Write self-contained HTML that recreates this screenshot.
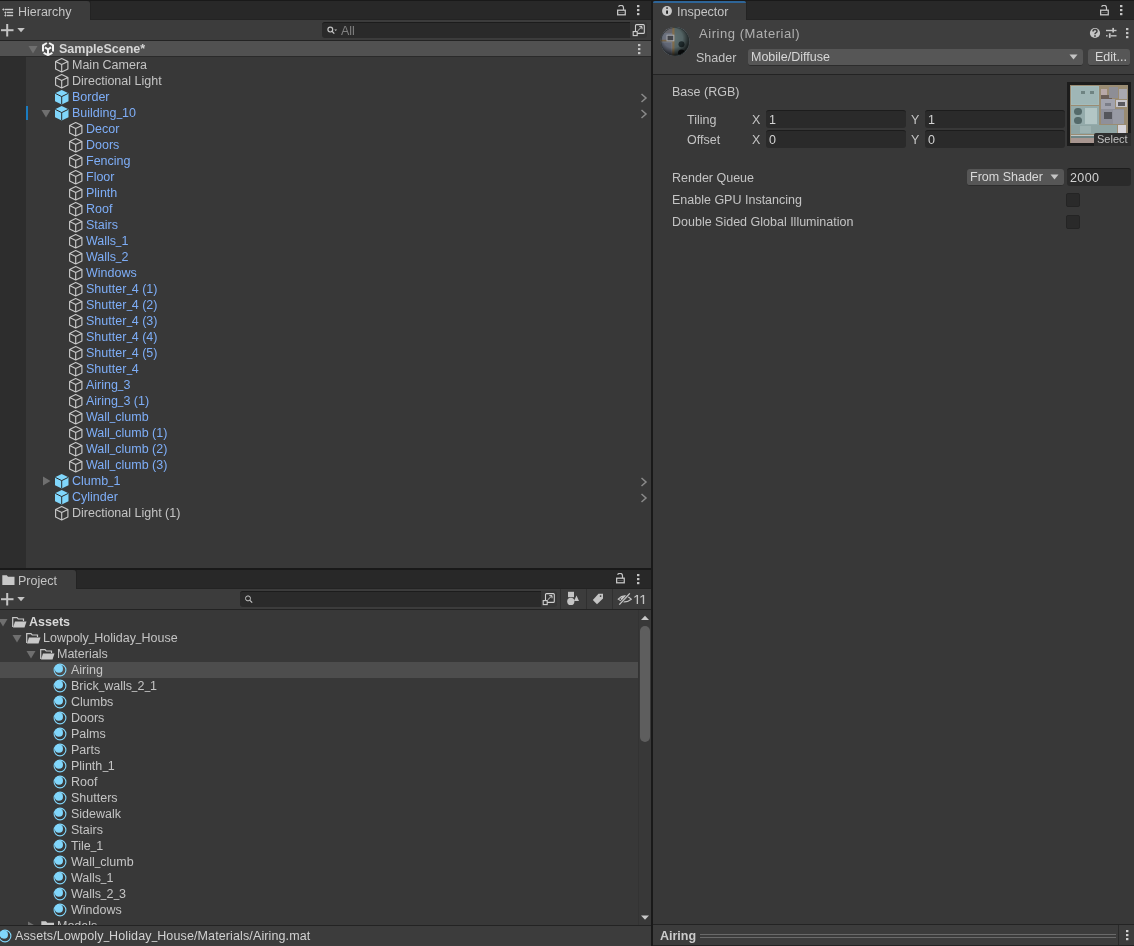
<!DOCTYPE html><html><head><meta charset="utf-8"><style>
html,body{margin:0;padding:0;width:1134px;height:946px;overflow:hidden;background:#191919;}
body{position:relative;font-family:"Liberation Sans", sans-serif;-webkit-font-smoothing:antialiased;}
div{position:absolute;box-sizing:border-box;}
.t{white-space:nowrap;will-change:transform;}
.u{display:inline-block;transform:scaleX(0.8);margin:0 -0.75px;position:relative;top:-1.5px;}
svg{position:absolute;}
</style></head><body>
<div style="left:0px;top:1px;width:651px;height:19px;background:#282828;border-bottom:1px solid #232323"></div>
<div style="left:89px;top:1px;width:2px;height:19px;background:#232323;"></div>
<div style="left:0px;top:1px;width:90px;height:20px;background:#3c3c3c;border-radius:0 3px 0 0"></div>
<svg style="position:absolute;left:0px;top:2px" width="16" height="16" viewBox="0 0 16 16"><g fill="#c8c8c8"><rect x="4.8" y="6.8" width="8.3" height="1.4"/><path d="M2.1 7.5 L3.4 6.2 L4.7 7.5 L3.4 8.8 Z"/><rect x="6.9" y="9.8" width="6.2" height="1.4"/><path d="M4.2 10.5 L5.4 9.3 L6.6 10.5 L5.4 11.7 Z"/><rect x="6.9" y="12.8" width="6.2" height="1.4"/><path d="M4.2 13.5 L5.4 12.3 L6.6 13.5 L5.4 14.7 Z"/><rect x="5.1" y="10.5" width="0.6" height="3"/></g></svg>
<div class="t" style="left:18px;top:4px;color:#c4c4c4;font-size:12.5px;font-weight:normal;line-height:16px;">Hierarchy</div>
<svg style="position:absolute;left:617px;top:4.6px" width="10" height="11" viewBox="0 0 10 11"><path d="M1.5 1.6 Q2.7 0.1 4.3 0.3 Q6.5 0.5 6.5 2.8 L6.5 4.9" fill="none" stroke="#c4c4c4" stroke-width="1.2"/><rect x="0.65" y="5.2" width="7.6" height="4.6" fill="none" stroke="#c4c4c4" stroke-width="1.3"/><rect x="1.3" y="7.1" width="6.3" height="0.9" fill="#555555"/></svg>
<svg style="position:absolute;left:637px;top:5px" width="3" height="11" viewBox="0 0 3 11"><rect x="0" y="0" width="2.4" height="2.2" fill="#c4c4c4"/><rect x="0" y="4" width="2.4" height="2.2" fill="#c4c4c4"/><rect x="0" y="8" width="2.4" height="2.2" fill="#c4c4c4"/></svg>
<div style="left:0px;top:20px;width:651px;height:20px;background:#3c3c3c;"></div>
<svg style="position:absolute;left:1px;top:24px" width="26" height="13" viewBox="0 0 26 13"><rect x="0" y="5.2" width="12.5" height="2" fill="#c4c4c4"/><rect x="5.2" y="0" width="2" height="12.5" fill="#c4c4c4"/><path d="M16.3 4 L23.8 4 L20 8.3 Z" fill="#c4c4c4"/></svg>
<div style="left:322px;top:22px;width:308px;height:16px;background:#2a2a2a;border-radius:3px 0 0 3px;border-top:1px solid #1c1c1c"></div>
<svg style="position:absolute;left:327px;top:25.5px" width="14" height="10" viewBox="0 0 14 10"><circle cx="3.3" cy="3.6" r="2.4" fill="none" stroke="#c4c4c4" stroke-width="1.2"/><path d="M5 5.3 L7.3 7.6" stroke="#c4c4c4" stroke-width="1.3"/><path d="M7.3 3.4 L10.1 3.4 L8.7 5 Z" fill="#c4c4c4"/></svg>
<div class="t" style="left:341px;top:22.5px;color:#808080;font-size:12.5px;font-weight:normal;line-height:16px;">All</div>
<div style="left:630px;top:22px;width:17px;height:16px;background:#363636;border-radius:0 3px 3px 0"></div>
<svg style="position:absolute;left:632px;top:24px" width="13" height="13" viewBox="0 0 13 13"><rect x="3.5" y="0.6" width="8.8" height="8.8" rx="1" fill="none" stroke="#d0d0d0" stroke-width="1.1"/><path d="M5.5 7 L10 2.6 M7.3 2.6 L10 2.6 L10 5.3" fill="none" stroke="#d0d0d0" stroke-width="1"/><rect x="1.2" y="7.6" width="4" height="4" fill="#363636" stroke="#d0d0d0" stroke-width="1.1"/></svg>
<div style="left:0px;top:40px;width:651px;height:1px;background:#232323;"></div>
<div style="left:0px;top:41px;width:651px;height:15px;background:#515151;"></div>
<div style="left:0px;top:56px;width:651px;height:1px;background:#2a2a2a;"></div>
<svg style="position:absolute;left:28px;top:45px" width="10" height="9" viewBox="0 0 10 9"><path d="M0.5 1 L9.5 1 L5 8.5 Z" fill="#6f6f6f"/></svg>
<svg style="position:absolute;left:42px;top:41.7px" width="12" height="14" viewBox="0 0 12 14"><g fill="none" stroke="#f2f2f2" stroke-width="2" stroke-linejoin="miter" stroke-miterlimit="3"><path d="M1 9.6 L1 3.3 L4.9 1"/><path d="M11 9.6 L11 3.3 L7.1 1"/><path d="M2.9 5.4 L6 7.4 L9.1 5.4"/><path d="M6 7.4 L6 12.2"/><path d="M1.6 10.8 L6 13.1 L10.4 10.8"/></g></svg>
<div class="t" style="left:59px;top:41px;color:#d6d6d6;font-size:12.5px;font-weight:bold;line-height:16px;">SampleScene*</div>
<svg style="position:absolute;left:638px;top:44px" width="3" height="11" viewBox="0 0 3 11"><rect x="0" y="0" width="2.4" height="2.2" fill="#c4c4c4"/><rect x="0" y="4" width="2.4" height="2.2" fill="#c4c4c4"/><rect x="0" y="8" width="2.4" height="2.2" fill="#c4c4c4"/></svg>
<div style="left:0px;top:57px;width:651px;height:511px;background:#383838;"></div>
<div style="left:0px;top:57px;width:26px;height:511px;background:#2d2d2d;"></div>
<div style="left:26px;top:106px;width:2px;height:14px;background:#1a7bc0;"></div>
<svg style="position:absolute;left:55px;top:58px" width="14" height="15" viewBox="0 0 14 15"><path d="M6.7 0.6 L12.9 3.5 L12.9 10.9 L6.7 13.9 L0.6 10.9 L0.6 3.5 Z M0.6 3.5 L6.7 6.5 L12.9 3.5 M6.7 6.5 L6.7 13.9" fill="none" stroke="#c8c8c8" stroke-width="1.15" stroke-linejoin="round"/></svg>
<div class="t" style="left:72px;top:57px;color:#c4c4c4;font-size:12.5px;font-weight:normal;line-height:16px;">Main Camera</div>
<svg style="position:absolute;left:55px;top:74px" width="14" height="15" viewBox="0 0 14 15"><path d="M6.7 0.6 L12.9 3.5 L12.9 10.9 L6.7 13.9 L0.6 10.9 L0.6 3.5 Z M0.6 3.5 L6.7 6.5 L12.9 3.5 M6.7 6.5 L6.7 13.9" fill="none" stroke="#c8c8c8" stroke-width="1.15" stroke-linejoin="round"/></svg>
<div class="t" style="left:72px;top:73px;color:#c4c4c4;font-size:12.5px;font-weight:normal;line-height:16px;">Directional Light</div>
<svg style="position:absolute;left:55px;top:90px" width="14" height="15" viewBox="0 0 14 15"><path d="M6.7 0 L13.5 3.2 L13.5 11.2 L6.7 14.5 L0 11.2 L0 3.2 Z" fill="#80d6fb"/><path d="M0.3 3.4 L6.7 6.6 L13.2 3.4 M6.7 6.6 L6.7 14.2" fill="none" stroke="#2b2b2b" stroke-width="1"/></svg>
<div class="t" style="left:72px;top:89px;color:#7eaef8;font-size:12.5px;font-weight:normal;line-height:16px;">Border</div>
<svg style="position:absolute;left:640px;top:92.5px" width="8" height="10" viewBox="0 0 8 10"><path d="M1.5 1 L6 5 L1.5 9" fill="none" stroke="#8a8a8a" stroke-width="1.5"/></svg>
<svg style="position:absolute;left:55px;top:106px" width="14" height="15" viewBox="0 0 14 15"><path d="M6.7 0 L13.5 3.2 L13.5 11.2 L6.7 14.5 L0 11.2 L0 3.2 Z" fill="#80d6fb"/><path d="M0.3 3.4 L6.7 6.6 L13.2 3.4 M6.7 6.6 L6.7 14.2" fill="none" stroke="#2b2b2b" stroke-width="1"/></svg>
<svg style="position:absolute;left:41px;top:109px" width="10" height="9" viewBox="0 0 10 9"><path d="M0.5 1 L9.5 1 L5 8.5 Z" fill="#6f6f6f"/></svg>
<div class="t" style="left:72px;top:105px;color:#7eaef8;font-size:12.5px;font-weight:normal;line-height:16px;">Building<span class="u">_</span>10</div>
<svg style="position:absolute;left:640px;top:108.5px" width="8" height="10" viewBox="0 0 8 10"><path d="M1.5 1 L6 5 L1.5 9" fill="none" stroke="#8a8a8a" stroke-width="1.5"/></svg>
<svg style="position:absolute;left:69px;top:122px" width="14" height="15" viewBox="0 0 14 15"><path d="M6.7 0.6 L12.9 3.5 L12.9 10.9 L6.7 13.9 L0.6 10.9 L0.6 3.5 Z M0.6 3.5 L6.7 6.5 L12.9 3.5 M6.7 6.5 L6.7 13.9" fill="none" stroke="#c8c8c8" stroke-width="1.15" stroke-linejoin="round"/></svg>
<div class="t" style="left:86px;top:121px;color:#7eaef8;font-size:12.5px;font-weight:normal;line-height:16px;">Decor</div>
<svg style="position:absolute;left:69px;top:138px" width="14" height="15" viewBox="0 0 14 15"><path d="M6.7 0.6 L12.9 3.5 L12.9 10.9 L6.7 13.9 L0.6 10.9 L0.6 3.5 Z M0.6 3.5 L6.7 6.5 L12.9 3.5 M6.7 6.5 L6.7 13.9" fill="none" stroke="#c8c8c8" stroke-width="1.15" stroke-linejoin="round"/></svg>
<div class="t" style="left:86px;top:137px;color:#7eaef8;font-size:12.5px;font-weight:normal;line-height:16px;">Doors</div>
<svg style="position:absolute;left:69px;top:154px" width="14" height="15" viewBox="0 0 14 15"><path d="M6.7 0.6 L12.9 3.5 L12.9 10.9 L6.7 13.9 L0.6 10.9 L0.6 3.5 Z M0.6 3.5 L6.7 6.5 L12.9 3.5 M6.7 6.5 L6.7 13.9" fill="none" stroke="#c8c8c8" stroke-width="1.15" stroke-linejoin="round"/></svg>
<div class="t" style="left:86px;top:153px;color:#7eaef8;font-size:12.5px;font-weight:normal;line-height:16px;">Fencing</div>
<svg style="position:absolute;left:69px;top:170px" width="14" height="15" viewBox="0 0 14 15"><path d="M6.7 0.6 L12.9 3.5 L12.9 10.9 L6.7 13.9 L0.6 10.9 L0.6 3.5 Z M0.6 3.5 L6.7 6.5 L12.9 3.5 M6.7 6.5 L6.7 13.9" fill="none" stroke="#c8c8c8" stroke-width="1.15" stroke-linejoin="round"/></svg>
<div class="t" style="left:86px;top:169px;color:#7eaef8;font-size:12.5px;font-weight:normal;line-height:16px;">Floor</div>
<svg style="position:absolute;left:69px;top:186px" width="14" height="15" viewBox="0 0 14 15"><path d="M6.7 0.6 L12.9 3.5 L12.9 10.9 L6.7 13.9 L0.6 10.9 L0.6 3.5 Z M0.6 3.5 L6.7 6.5 L12.9 3.5 M6.7 6.5 L6.7 13.9" fill="none" stroke="#c8c8c8" stroke-width="1.15" stroke-linejoin="round"/></svg>
<div class="t" style="left:86px;top:185px;color:#7eaef8;font-size:12.5px;font-weight:normal;line-height:16px;">Plinth</div>
<svg style="position:absolute;left:69px;top:202px" width="14" height="15" viewBox="0 0 14 15"><path d="M6.7 0.6 L12.9 3.5 L12.9 10.9 L6.7 13.9 L0.6 10.9 L0.6 3.5 Z M0.6 3.5 L6.7 6.5 L12.9 3.5 M6.7 6.5 L6.7 13.9" fill="none" stroke="#c8c8c8" stroke-width="1.15" stroke-linejoin="round"/></svg>
<div class="t" style="left:86px;top:201px;color:#7eaef8;font-size:12.5px;font-weight:normal;line-height:16px;">Roof</div>
<svg style="position:absolute;left:69px;top:218px" width="14" height="15" viewBox="0 0 14 15"><path d="M6.7 0.6 L12.9 3.5 L12.9 10.9 L6.7 13.9 L0.6 10.9 L0.6 3.5 Z M0.6 3.5 L6.7 6.5 L12.9 3.5 M6.7 6.5 L6.7 13.9" fill="none" stroke="#c8c8c8" stroke-width="1.15" stroke-linejoin="round"/></svg>
<div class="t" style="left:86px;top:217px;color:#7eaef8;font-size:12.5px;font-weight:normal;line-height:16px;">Stairs</div>
<svg style="position:absolute;left:69px;top:234px" width="14" height="15" viewBox="0 0 14 15"><path d="M6.7 0.6 L12.9 3.5 L12.9 10.9 L6.7 13.9 L0.6 10.9 L0.6 3.5 Z M0.6 3.5 L6.7 6.5 L12.9 3.5 M6.7 6.5 L6.7 13.9" fill="none" stroke="#c8c8c8" stroke-width="1.15" stroke-linejoin="round"/></svg>
<div class="t" style="left:86px;top:233px;color:#7eaef8;font-size:12.5px;font-weight:normal;line-height:16px;">Walls<span class="u">_</span>1</div>
<svg style="position:absolute;left:69px;top:250px" width="14" height="15" viewBox="0 0 14 15"><path d="M6.7 0.6 L12.9 3.5 L12.9 10.9 L6.7 13.9 L0.6 10.9 L0.6 3.5 Z M0.6 3.5 L6.7 6.5 L12.9 3.5 M6.7 6.5 L6.7 13.9" fill="none" stroke="#c8c8c8" stroke-width="1.15" stroke-linejoin="round"/></svg>
<div class="t" style="left:86px;top:249px;color:#7eaef8;font-size:12.5px;font-weight:normal;line-height:16px;">Walls<span class="u">_</span>2</div>
<svg style="position:absolute;left:69px;top:266px" width="14" height="15" viewBox="0 0 14 15"><path d="M6.7 0.6 L12.9 3.5 L12.9 10.9 L6.7 13.9 L0.6 10.9 L0.6 3.5 Z M0.6 3.5 L6.7 6.5 L12.9 3.5 M6.7 6.5 L6.7 13.9" fill="none" stroke="#c8c8c8" stroke-width="1.15" stroke-linejoin="round"/></svg>
<div class="t" style="left:86px;top:265px;color:#7eaef8;font-size:12.5px;font-weight:normal;line-height:16px;">Windows</div>
<svg style="position:absolute;left:69px;top:282px" width="14" height="15" viewBox="0 0 14 15"><path d="M6.7 0.6 L12.9 3.5 L12.9 10.9 L6.7 13.9 L0.6 10.9 L0.6 3.5 Z M0.6 3.5 L6.7 6.5 L12.9 3.5 M6.7 6.5 L6.7 13.9" fill="none" stroke="#c8c8c8" stroke-width="1.15" stroke-linejoin="round"/></svg>
<div class="t" style="left:86px;top:281px;color:#7eaef8;font-size:12.5px;font-weight:normal;line-height:16px;">Shutter<span class="u">_</span>4 (1)</div>
<svg style="position:absolute;left:69px;top:298px" width="14" height="15" viewBox="0 0 14 15"><path d="M6.7 0.6 L12.9 3.5 L12.9 10.9 L6.7 13.9 L0.6 10.9 L0.6 3.5 Z M0.6 3.5 L6.7 6.5 L12.9 3.5 M6.7 6.5 L6.7 13.9" fill="none" stroke="#c8c8c8" stroke-width="1.15" stroke-linejoin="round"/></svg>
<div class="t" style="left:86px;top:297px;color:#7eaef8;font-size:12.5px;font-weight:normal;line-height:16px;">Shutter<span class="u">_</span>4 (2)</div>
<svg style="position:absolute;left:69px;top:314px" width="14" height="15" viewBox="0 0 14 15"><path d="M6.7 0.6 L12.9 3.5 L12.9 10.9 L6.7 13.9 L0.6 10.9 L0.6 3.5 Z M0.6 3.5 L6.7 6.5 L12.9 3.5 M6.7 6.5 L6.7 13.9" fill="none" stroke="#c8c8c8" stroke-width="1.15" stroke-linejoin="round"/></svg>
<div class="t" style="left:86px;top:313px;color:#7eaef8;font-size:12.5px;font-weight:normal;line-height:16px;">Shutter<span class="u">_</span>4 (3)</div>
<svg style="position:absolute;left:69px;top:330px" width="14" height="15" viewBox="0 0 14 15"><path d="M6.7 0.6 L12.9 3.5 L12.9 10.9 L6.7 13.9 L0.6 10.9 L0.6 3.5 Z M0.6 3.5 L6.7 6.5 L12.9 3.5 M6.7 6.5 L6.7 13.9" fill="none" stroke="#c8c8c8" stroke-width="1.15" stroke-linejoin="round"/></svg>
<div class="t" style="left:86px;top:329px;color:#7eaef8;font-size:12.5px;font-weight:normal;line-height:16px;">Shutter<span class="u">_</span>4 (4)</div>
<svg style="position:absolute;left:69px;top:346px" width="14" height="15" viewBox="0 0 14 15"><path d="M6.7 0.6 L12.9 3.5 L12.9 10.9 L6.7 13.9 L0.6 10.9 L0.6 3.5 Z M0.6 3.5 L6.7 6.5 L12.9 3.5 M6.7 6.5 L6.7 13.9" fill="none" stroke="#c8c8c8" stroke-width="1.15" stroke-linejoin="round"/></svg>
<div class="t" style="left:86px;top:345px;color:#7eaef8;font-size:12.5px;font-weight:normal;line-height:16px;">Shutter<span class="u">_</span>4 (5)</div>
<svg style="position:absolute;left:69px;top:362px" width="14" height="15" viewBox="0 0 14 15"><path d="M6.7 0.6 L12.9 3.5 L12.9 10.9 L6.7 13.9 L0.6 10.9 L0.6 3.5 Z M0.6 3.5 L6.7 6.5 L12.9 3.5 M6.7 6.5 L6.7 13.9" fill="none" stroke="#c8c8c8" stroke-width="1.15" stroke-linejoin="round"/></svg>
<div class="t" style="left:86px;top:361px;color:#7eaef8;font-size:12.5px;font-weight:normal;line-height:16px;">Shutter<span class="u">_</span>4</div>
<svg style="position:absolute;left:69px;top:378px" width="14" height="15" viewBox="0 0 14 15"><path d="M6.7 0.6 L12.9 3.5 L12.9 10.9 L6.7 13.9 L0.6 10.9 L0.6 3.5 Z M0.6 3.5 L6.7 6.5 L12.9 3.5 M6.7 6.5 L6.7 13.9" fill="none" stroke="#c8c8c8" stroke-width="1.15" stroke-linejoin="round"/></svg>
<div class="t" style="left:86px;top:377px;color:#7eaef8;font-size:12.5px;font-weight:normal;line-height:16px;">Airing<span class="u">_</span>3</div>
<svg style="position:absolute;left:69px;top:394px" width="14" height="15" viewBox="0 0 14 15"><path d="M6.7 0.6 L12.9 3.5 L12.9 10.9 L6.7 13.9 L0.6 10.9 L0.6 3.5 Z M0.6 3.5 L6.7 6.5 L12.9 3.5 M6.7 6.5 L6.7 13.9" fill="none" stroke="#c8c8c8" stroke-width="1.15" stroke-linejoin="round"/></svg>
<div class="t" style="left:86px;top:393px;color:#7eaef8;font-size:12.5px;font-weight:normal;line-height:16px;">Airing<span class="u">_</span>3 (1)</div>
<svg style="position:absolute;left:69px;top:410px" width="14" height="15" viewBox="0 0 14 15"><path d="M6.7 0.6 L12.9 3.5 L12.9 10.9 L6.7 13.9 L0.6 10.9 L0.6 3.5 Z M0.6 3.5 L6.7 6.5 L12.9 3.5 M6.7 6.5 L6.7 13.9" fill="none" stroke="#c8c8c8" stroke-width="1.15" stroke-linejoin="round"/></svg>
<div class="t" style="left:86px;top:409px;color:#7eaef8;font-size:12.5px;font-weight:normal;line-height:16px;">Wall<span class="u">_</span>clumb</div>
<svg style="position:absolute;left:69px;top:426px" width="14" height="15" viewBox="0 0 14 15"><path d="M6.7 0.6 L12.9 3.5 L12.9 10.9 L6.7 13.9 L0.6 10.9 L0.6 3.5 Z M0.6 3.5 L6.7 6.5 L12.9 3.5 M6.7 6.5 L6.7 13.9" fill="none" stroke="#c8c8c8" stroke-width="1.15" stroke-linejoin="round"/></svg>
<div class="t" style="left:86px;top:425px;color:#7eaef8;font-size:12.5px;font-weight:normal;line-height:16px;">Wall<span class="u">_</span>clumb (1)</div>
<svg style="position:absolute;left:69px;top:442px" width="14" height="15" viewBox="0 0 14 15"><path d="M6.7 0.6 L12.9 3.5 L12.9 10.9 L6.7 13.9 L0.6 10.9 L0.6 3.5 Z M0.6 3.5 L6.7 6.5 L12.9 3.5 M6.7 6.5 L6.7 13.9" fill="none" stroke="#c8c8c8" stroke-width="1.15" stroke-linejoin="round"/></svg>
<div class="t" style="left:86px;top:441px;color:#7eaef8;font-size:12.5px;font-weight:normal;line-height:16px;">Wall<span class="u">_</span>clumb (2)</div>
<svg style="position:absolute;left:69px;top:458px" width="14" height="15" viewBox="0 0 14 15"><path d="M6.7 0.6 L12.9 3.5 L12.9 10.9 L6.7 13.9 L0.6 10.9 L0.6 3.5 Z M0.6 3.5 L6.7 6.5 L12.9 3.5 M6.7 6.5 L6.7 13.9" fill="none" stroke="#c8c8c8" stroke-width="1.15" stroke-linejoin="round"/></svg>
<div class="t" style="left:86px;top:457px;color:#7eaef8;font-size:12.5px;font-weight:normal;line-height:16px;">Wall<span class="u">_</span>clumb (3)</div>
<svg style="position:absolute;left:55px;top:474px" width="14" height="15" viewBox="0 0 14 15"><path d="M6.7 0 L13.5 3.2 L13.5 11.2 L6.7 14.5 L0 11.2 L0 3.2 Z" fill="#80d6fb"/><path d="M0.3 3.4 L6.7 6.6 L13.2 3.4 M6.7 6.6 L6.7 14.2" fill="none" stroke="#2b2b2b" stroke-width="1"/></svg>
<svg style="position:absolute;left:42px;top:476px" width="9" height="10" viewBox="0 0 9 10"><path d="M1 0.5 L8.5 5 L1 9.5 Z" fill="#6f6f6f"/></svg>
<div class="t" style="left:72px;top:473px;color:#7eaef8;font-size:12.5px;font-weight:normal;line-height:16px;">Clumb<span class="u">_</span>1</div>
<svg style="position:absolute;left:640px;top:476.5px" width="8" height="10" viewBox="0 0 8 10"><path d="M1.5 1 L6 5 L1.5 9" fill="none" stroke="#8a8a8a" stroke-width="1.5"/></svg>
<svg style="position:absolute;left:55px;top:490px" width="14" height="15" viewBox="0 0 14 15"><path d="M6.7 0 L13.5 3.2 L13.5 11.2 L6.7 14.5 L0 11.2 L0 3.2 Z" fill="#80d6fb"/><path d="M0.3 3.4 L6.7 6.6 L13.2 3.4 M6.7 6.6 L6.7 14.2" fill="none" stroke="#2b2b2b" stroke-width="1"/></svg>
<div class="t" style="left:72px;top:489px;color:#7eaef8;font-size:12.5px;font-weight:normal;line-height:16px;">Cylinder</div>
<svg style="position:absolute;left:640px;top:492.5px" width="8" height="10" viewBox="0 0 8 10"><path d="M1.5 1 L6 5 L1.5 9" fill="none" stroke="#8a8a8a" stroke-width="1.5"/></svg>
<svg style="position:absolute;left:55px;top:506px" width="14" height="15" viewBox="0 0 14 15"><path d="M6.7 0.6 L12.9 3.5 L12.9 10.9 L6.7 13.9 L0.6 10.9 L0.6 3.5 Z M0.6 3.5 L6.7 6.5 L12.9 3.5 M6.7 6.5 L6.7 13.9" fill="none" stroke="#c8c8c8" stroke-width="1.15" stroke-linejoin="round"/></svg>
<div class="t" style="left:72px;top:505px;color:#c4c4c4;font-size:12.5px;font-weight:normal;line-height:16px;">Directional Light (1)</div>
<div style="left:0px;top:568px;width:651px;height:2px;background:#191919;"></div>
<div style="left:0px;top:570px;width:651px;height:19px;background:#282828;border-bottom:1px solid #232323"></div>
<div style="left:75px;top:570px;width:2px;height:19px;background:#232323;"></div>
<div style="left:0px;top:570px;width:76px;height:20px;background:#3c3c3c;border-radius:0 3px 0 0"></div>
<svg style="position:absolute;left:1.5px;top:575px" width="13" height="11" viewBox="0 0 13 11"><path d="M0.3 0.3 L4.8 0.3 L6 1.8 L12.5 1.8 L12.5 10 L0.3 10 Z" fill="#c8c8c8"/></svg>
<div class="t" style="left:18px;top:573px;color:#c4c4c4;font-size:12.5px;font-weight:normal;line-height:16px;">Project</div>
<svg style="position:absolute;left:616px;top:573px" width="10" height="11" viewBox="0 0 10 11"><path d="M1.5 1.6 Q2.7 0.1 4.3 0.3 Q6.5 0.5 6.5 2.8 L6.5 4.9" fill="none" stroke="#c4c4c4" stroke-width="1.2"/><rect x="0.65" y="5.2" width="7.6" height="4.6" fill="none" stroke="#c4c4c4" stroke-width="1.3"/><rect x="1.3" y="7.1" width="6.3" height="0.9" fill="#555555"/></svg>
<svg style="position:absolute;left:637px;top:574px" width="3" height="11" viewBox="0 0 3 11"><rect x="0" y="0" width="2.4" height="2.2" fill="#c4c4c4"/><rect x="0" y="4" width="2.4" height="2.2" fill="#c4c4c4"/><rect x="0" y="8" width="2.4" height="2.2" fill="#c4c4c4"/></svg>
<div style="left:0px;top:589px;width:651px;height:20px;background:#3c3c3c;"></div>
<svg style="position:absolute;left:1px;top:593px" width="26" height="13" viewBox="0 0 26 13"><rect x="0" y="5.2" width="12.5" height="2" fill="#c4c4c4"/><rect x="5.2" y="0" width="2" height="12.5" fill="#c4c4c4"/><path d="M16.3 4 L23.8 4 L20 8.3 Z" fill="#c4c4c4"/></svg>
<div style="left:240px;top:591px;width:301px;height:16px;background:#2a2a2a;border-radius:3px 0 0 3px;border-top:1px solid #1c1c1c"></div>
<svg style="position:absolute;left:245px;top:595px" width="10" height="10" viewBox="0 0 10 10"><circle cx="3" cy="3.4" r="2.5" fill="none" stroke="#c4c4c4" stroke-width="1"/><path d="M4.9 5.3 L7.2 7.6" stroke="#c4c4c4" stroke-width="1.2"/></svg>
<div style="left:541px;top:591px;width:16px;height:16px;background:#363636;border-radius:0 3px 3px 0"></div>
<svg style="position:absolute;left:542px;top:593px" width="13" height="13" viewBox="0 0 13 13"><rect x="3.5" y="0.6" width="8.8" height="8.8" rx="1" fill="none" stroke="#d0d0d0" stroke-width="1.1"/><path d="M5.5 7 L10 2.6 M7.3 2.6 L10 2.6 L10 5.3" fill="none" stroke="#d0d0d0" stroke-width="1"/><rect x="1.2" y="7.6" width="4" height="4" fill="#363636" stroke="#d0d0d0" stroke-width="1.1"/></svg>
<div style="left:560px;top:589px;width:1px;height:20px;background:#303030;"></div>
<div style="left:586px;top:589px;width:1px;height:20px;background:#303030;"></div>
<div style="left:612px;top:589px;width:1px;height:20px;background:#303030;"></div>
<svg style="position:absolute;left:566px;top:591px" width="14" height="15" viewBox="0 0 14 15"><rect x="2" y="0.8" width="6" height="5.4" fill="#c4c4c4"/><circle cx="4.8" cy="10.4" r="3.6" fill="#c4c4c4"/><path d="M8 9.9 L10.5 4.6 L13 9.9 Z" fill="#c4c4c4"/></svg>
<svg style="position:absolute;left:592px;top:593px" width="13" height="12" viewBox="0 0 13 12"><path d="M6.5 0.8 L11 0.8 L11 5.6 L5 11.3 L0.8 7 Z" fill="#c4c4c4"/><circle cx="8.6" cy="3.1" r="0.9" fill="#3c3c3c"/></svg>
<svg style="position:absolute;left:617px;top:592px" width="16" height="14" viewBox="0 0 16 14"><path d="M1.2 7.2 Q7.5 0.6 14.3 7.2 Q7.5 12.6 1.2 7.2 Z" fill="none" stroke="#c4c4c4" stroke-width="1.1"/><path d="M3.5 6.5 Q6 3.2 9.6 4 L5.5 8.8 Q4 8.2 3.5 6.5 Z" fill="#c4c4c4"/><path d="M7.2 8.6 L9.8 5.6" stroke="#c4c4c4" stroke-width="1"/><path d="M2.3 12.6 L12.8 1.4" stroke="#3c3c3c" stroke-width="2.4"/><path d="M2.3 12.6 L12.8 1.4" stroke="#c8c8c8" stroke-width="1.3"/></svg>
<svg style="position:absolute;left:633px;top:594px" width="13" height="11" viewBox="0 0 13 11"><g fill="#c4c4c4"><rect x="3.7" y="1" width="1.35" height="9"/><rect x="9.8" y="1" width="1.35" height="9"/></g><g stroke="#c4c4c4" stroke-width="1.1"><path d="M1.3 3.4 L4.3 1.3"/><path d="M7.4 3.4 L10.4 1.3"/></g></svg>
<div style="left:0px;top:609px;width:651px;height:1px;background:#232323;"></div>
<div style="left:0px;top:610px;width:651px;height:315px;background:#383838;"></div>
<div style="left:0px;top:662px;width:638px;height:16px;background:#4d4d4d;"></div>
<svg style="position:absolute;left:12px;top:617px" width="15" height="11" viewBox="0 0 15 11"><path d="M0.7 10 L0.7 0.7 L5 0.7 L6.2 2 L11.5 2 L11.5 4" fill="none" stroke="#c8c8c8" stroke-width="1.2"/><path d="M1 10.5 L3 4.5 L14.5 4.5 L12.5 10.5 Z" fill="#c8c8c8"/></svg>
<svg style="position:absolute;left:-2.5px;top:618px" width="10" height="9" viewBox="0 0 10 9"><path d="M0.5 1 L9.5 1 L5 8.5 Z" fill="#6f6f6f"/></svg>
<div class="t" style="left:28.5px;top:614px;color:#d8d8d8;font-size:12.5px;font-weight:bold;line-height:16px;">Assets</div>
<svg style="position:absolute;left:26px;top:633px" width="15" height="11" viewBox="0 0 15 11"><path d="M0.7 10 L0.7 0.7 L5 0.7 L6.2 2 L11.5 2 L11.5 4" fill="none" stroke="#c8c8c8" stroke-width="1.2"/><path d="M1 10.5 L3 4.5 L14.5 4.5 L12.5 10.5 Z" fill="#c8c8c8"/></svg>
<svg style="position:absolute;left:11.5px;top:634px" width="10" height="9" viewBox="0 0 10 9"><path d="M0.5 1 L9.5 1 L5 8.5 Z" fill="#6f6f6f"/></svg>
<div class="t" style="left:42.5px;top:630px;color:#c4c4c4;font-size:12.5px;font-weight:normal;line-height:16px;">Lowpoly<span class="u">_</span>Holiday<span class="u">_</span>House</div>
<svg style="position:absolute;left:40px;top:649px" width="15" height="11" viewBox="0 0 15 11"><path d="M0.7 10 L0.7 0.7 L5 0.7 L6.2 2 L11.5 2 L11.5 4" fill="none" stroke="#c8c8c8" stroke-width="1.2"/><path d="M1 10.5 L3 4.5 L14.5 4.5 L12.5 10.5 Z" fill="#c8c8c8"/></svg>
<svg style="position:absolute;left:25.5px;top:650px" width="10" height="9" viewBox="0 0 10 9"><path d="M0.5 1 L9.5 1 L5 8.5 Z" fill="#6f6f6f"/></svg>
<div class="t" style="left:56.5px;top:646px;color:#c4c4c4;font-size:12.5px;font-weight:normal;line-height:16px;">Materials</div>
<svg style="position:absolute;left:52.5px;top:663px" width="14" height="14" viewBox="0 0 14 14"><circle cx="7" cy="7" r="5.9" fill="none" stroke="#80d6fb" stroke-width="1.1"/><circle cx="5.9" cy="5.7" r="4.1" fill="#80d6fb"/></svg>
<div class="t" style="left:70.5px;top:662px;color:#c4c4c4;font-size:12.5px;font-weight:normal;line-height:16px;">Airing</div>
<svg style="position:absolute;left:52.5px;top:679px" width="14" height="14" viewBox="0 0 14 14"><circle cx="7" cy="7" r="5.9" fill="none" stroke="#80d6fb" stroke-width="1.1"/><circle cx="5.9" cy="5.7" r="4.1" fill="#80d6fb"/></svg>
<div class="t" style="left:70.5px;top:678px;color:#c4c4c4;font-size:12.5px;font-weight:normal;line-height:16px;">Brick<span class="u">_</span>walls<span class="u">_</span>2<span class="u">_</span>1</div>
<svg style="position:absolute;left:52.5px;top:695px" width="14" height="14" viewBox="0 0 14 14"><circle cx="7" cy="7" r="5.9" fill="none" stroke="#80d6fb" stroke-width="1.1"/><circle cx="5.9" cy="5.7" r="4.1" fill="#80d6fb"/></svg>
<div class="t" style="left:70.5px;top:694px;color:#c4c4c4;font-size:12.5px;font-weight:normal;line-height:16px;">Clumbs</div>
<svg style="position:absolute;left:52.5px;top:711px" width="14" height="14" viewBox="0 0 14 14"><circle cx="7" cy="7" r="5.9" fill="none" stroke="#80d6fb" stroke-width="1.1"/><circle cx="5.9" cy="5.7" r="4.1" fill="#80d6fb"/></svg>
<div class="t" style="left:70.5px;top:710px;color:#c4c4c4;font-size:12.5px;font-weight:normal;line-height:16px;">Doors</div>
<svg style="position:absolute;left:52.5px;top:727px" width="14" height="14" viewBox="0 0 14 14"><circle cx="7" cy="7" r="5.9" fill="none" stroke="#80d6fb" stroke-width="1.1"/><circle cx="5.9" cy="5.7" r="4.1" fill="#80d6fb"/></svg>
<div class="t" style="left:70.5px;top:726px;color:#c4c4c4;font-size:12.5px;font-weight:normal;line-height:16px;">Palms</div>
<svg style="position:absolute;left:52.5px;top:743px" width="14" height="14" viewBox="0 0 14 14"><circle cx="7" cy="7" r="5.9" fill="none" stroke="#80d6fb" stroke-width="1.1"/><circle cx="5.9" cy="5.7" r="4.1" fill="#80d6fb"/></svg>
<div class="t" style="left:70.5px;top:742px;color:#c4c4c4;font-size:12.5px;font-weight:normal;line-height:16px;">Parts</div>
<svg style="position:absolute;left:52.5px;top:759px" width="14" height="14" viewBox="0 0 14 14"><circle cx="7" cy="7" r="5.9" fill="none" stroke="#80d6fb" stroke-width="1.1"/><circle cx="5.9" cy="5.7" r="4.1" fill="#80d6fb"/></svg>
<div class="t" style="left:70.5px;top:758px;color:#c4c4c4;font-size:12.5px;font-weight:normal;line-height:16px;">Plinth<span class="u">_</span>1</div>
<svg style="position:absolute;left:52.5px;top:775px" width="14" height="14" viewBox="0 0 14 14"><circle cx="7" cy="7" r="5.9" fill="none" stroke="#80d6fb" stroke-width="1.1"/><circle cx="5.9" cy="5.7" r="4.1" fill="#80d6fb"/></svg>
<div class="t" style="left:70.5px;top:774px;color:#c4c4c4;font-size:12.5px;font-weight:normal;line-height:16px;">Roof</div>
<svg style="position:absolute;left:52.5px;top:791px" width="14" height="14" viewBox="0 0 14 14"><circle cx="7" cy="7" r="5.9" fill="none" stroke="#80d6fb" stroke-width="1.1"/><circle cx="5.9" cy="5.7" r="4.1" fill="#80d6fb"/></svg>
<div class="t" style="left:70.5px;top:790px;color:#c4c4c4;font-size:12.5px;font-weight:normal;line-height:16px;">Shutters</div>
<svg style="position:absolute;left:52.5px;top:807px" width="14" height="14" viewBox="0 0 14 14"><circle cx="7" cy="7" r="5.9" fill="none" stroke="#80d6fb" stroke-width="1.1"/><circle cx="5.9" cy="5.7" r="4.1" fill="#80d6fb"/></svg>
<div class="t" style="left:70.5px;top:806px;color:#c4c4c4;font-size:12.5px;font-weight:normal;line-height:16px;">Sidewalk</div>
<svg style="position:absolute;left:52.5px;top:823px" width="14" height="14" viewBox="0 0 14 14"><circle cx="7" cy="7" r="5.9" fill="none" stroke="#80d6fb" stroke-width="1.1"/><circle cx="5.9" cy="5.7" r="4.1" fill="#80d6fb"/></svg>
<div class="t" style="left:70.5px;top:822px;color:#c4c4c4;font-size:12.5px;font-weight:normal;line-height:16px;">Stairs</div>
<svg style="position:absolute;left:52.5px;top:839px" width="14" height="14" viewBox="0 0 14 14"><circle cx="7" cy="7" r="5.9" fill="none" stroke="#80d6fb" stroke-width="1.1"/><circle cx="5.9" cy="5.7" r="4.1" fill="#80d6fb"/></svg>
<div class="t" style="left:70.5px;top:838px;color:#c4c4c4;font-size:12.5px;font-weight:normal;line-height:16px;">Tile<span class="u">_</span>1</div>
<svg style="position:absolute;left:52.5px;top:855px" width="14" height="14" viewBox="0 0 14 14"><circle cx="7" cy="7" r="5.9" fill="none" stroke="#80d6fb" stroke-width="1.1"/><circle cx="5.9" cy="5.7" r="4.1" fill="#80d6fb"/></svg>
<div class="t" style="left:70.5px;top:854px;color:#c4c4c4;font-size:12.5px;font-weight:normal;line-height:16px;">Wall<span class="u">_</span>clumb</div>
<svg style="position:absolute;left:52.5px;top:871px" width="14" height="14" viewBox="0 0 14 14"><circle cx="7" cy="7" r="5.9" fill="none" stroke="#80d6fb" stroke-width="1.1"/><circle cx="5.9" cy="5.7" r="4.1" fill="#80d6fb"/></svg>
<div class="t" style="left:70.5px;top:870px;color:#c4c4c4;font-size:12.5px;font-weight:normal;line-height:16px;">Walls<span class="u">_</span>1</div>
<svg style="position:absolute;left:52.5px;top:887px" width="14" height="14" viewBox="0 0 14 14"><circle cx="7" cy="7" r="5.9" fill="none" stroke="#80d6fb" stroke-width="1.1"/><circle cx="5.9" cy="5.7" r="4.1" fill="#80d6fb"/></svg>
<div class="t" style="left:70.5px;top:886px;color:#c4c4c4;font-size:12.5px;font-weight:normal;line-height:16px;">Walls<span class="u">_</span>2<span class="u">_</span>3</div>
<svg style="position:absolute;left:52.5px;top:903px" width="14" height="14" viewBox="0 0 14 14"><circle cx="7" cy="7" r="5.9" fill="none" stroke="#80d6fb" stroke-width="1.1"/><circle cx="5.9" cy="5.7" r="4.1" fill="#80d6fb"/></svg>
<div class="t" style="left:70.5px;top:902px;color:#c4c4c4;font-size:12.5px;font-weight:normal;line-height:16px;">Windows</div>
<svg style="position:absolute;left:40.5px;top:921px" width="15" height="11" viewBox="0 0 15 11"><path d="M0.3 0.3 L5 0.3 L6.2 1.8 L13 1.8 L13 10.3 L0.3 10.3 Z" fill="#c8c8c8"/></svg>
<svg style="position:absolute;left:26.5px;top:921px" width="9" height="10" viewBox="0 0 9 10"><path d="M1 0.5 L8.5 5 L1 9.5 Z" fill="#6f6f6f"/></svg>
<div class="t" style="left:56.5px;top:918px;color:#c4c4c4;font-size:12.5px;font-weight:normal;line-height:16px;">Models</div>
<div style="left:638px;top:610px;width:13px;height:315px;background:#383838;border-left:1px solid #333333"></div>
<svg style="position:absolute;left:640px;top:615px" width="10" height="7" viewBox="0 0 10 7"><path d="M1 4.9 L9 4.9 L5 0.7 Z" fill="#c8c8c8"/></svg>
<div style="left:640px;top:626px;width:10px;height:116px;background:#5e5e5e;border-radius:5px"></div>
<svg style="position:absolute;left:640px;top:914.5px" width="10" height="7" viewBox="0 0 10 7"><path d="M1 0.5 L9 0.5 L5 4.7 Z" fill="#c8c8c8"/></svg>
<div style="left:0px;top:925px;width:651px;height:1px;background:#232323;"></div>
<div style="left:0px;top:926px;width:651px;height:20px;background:#3c3c3c;"></div>
<svg style="position:absolute;left:-2px;top:928.5px" width="14" height="14" viewBox="0 0 14 14"><circle cx="7" cy="7" r="5.9" fill="none" stroke="#80d6fb" stroke-width="1.1"/><circle cx="5.9" cy="5.7" r="4.1" fill="#80d6fb"/></svg>
<div class="t" style="left:15px;top:928px;color:#d2d2d2;font-size:12.5px;font-weight:normal;line-height:16px;letter-spacing:0.12px">Assets/Lowpoly<span class="u">_</span>Holiday<span class="u">_</span>House/Materials/Airing.mat</div>
<div style="left:651px;top:0px;width:2px;height:946px;background:#191919;"></div>
<div style="left:653px;top:1px;width:481px;height:19px;background:#282828;border-bottom:1px solid #232323"></div>
<div style="left:745px;top:1px;width:2px;height:19px;background:#232323;"></div>
<div style="left:653px;top:1px;width:93px;height:20px;background:#3c3c3c;border-radius:3px 3px 0 0"></div>
<div style="left:653px;top:1px;width:93px;height:2px;background:#2e6598;border-radius:3px 3px 0 0"></div>
<svg style="position:absolute;left:661.9px;top:5.9px" width="10" height="10" viewBox="0 0 10 10"><circle cx="5" cy="5" r="4.95" fill="#c8c8c8"/><rect x="4.1" y="1.3" width="1.9" height="1.6" fill="#4a4a4a"/><rect x="4.1" y="4.5" width="1.9" height="3.3" fill="#262626"/></svg>
<div class="t" style="left:677px;top:4px;color:#c4c4c4;font-size:12.5px;font-weight:normal;line-height:16px;">Inspector</div>
<svg style="position:absolute;left:1100px;top:4.6px" width="10" height="11" viewBox="0 0 10 11"><path d="M1.5 1.6 Q2.7 0.1 4.3 0.3 Q6.5 0.5 6.5 2.8 L6.5 4.9" fill="none" stroke="#c4c4c4" stroke-width="1.2"/><rect x="0.65" y="5.2" width="7.6" height="4.6" fill="none" stroke="#c4c4c4" stroke-width="1.3"/><rect x="1.3" y="7.1" width="6.3" height="0.9" fill="#555555"/></svg>
<svg style="position:absolute;left:1120px;top:5px" width="3" height="11" viewBox="0 0 3 11"><rect x="0" y="0" width="2.4" height="2.2" fill="#c4c4c4"/><rect x="0" y="4" width="2.4" height="2.2" fill="#c4c4c4"/><rect x="0" y="8" width="2.4" height="2.2" fill="#c4c4c4"/></svg>
<div style="left:653px;top:20px;width:481px;height:54px;background:#3e3e3e;"></div>
<svg style="position:absolute;left:659px;top:26px" width="32" height="32" viewBox="0 0 32 32"><defs><clipPath id="sc"><circle cx="16" cy="15.5" r="14.4"/></clipPath><radialGradient id="sh" cx="0.42" cy="0.38" r="0.62"><stop offset="0" stop-color="#000" stop-opacity="0"/><stop offset="0.55" stop-color="#000" stop-opacity="0.12"/><stop offset="1" stop-color="#000" stop-opacity="0.8"/></radialGradient></defs><g clip-path="url(#sc)"><rect x="0" y="0" width="32" height="32" fill="#777d8b"/><rect x="15" y="0" width="17" height="32" fill="#5f7172"/><rect x="2" y="0" width="13" height="7" fill="#6f6f76"/><rect x="13.3" y="0" width="2.2" height="32" fill="#8a7552"/><rect x="1" y="13.8" width="13" height="1.6" fill="#857152"/><rect x="8" y="9.2" width="6.8" height="5.6" fill="#44464c" stroke="#b0b2b8" stroke-width="1"/><rect x="3" y="17" width="9" height="12" fill="#6c7282"/><circle cx="22.5" cy="18.3" r="3" fill="#233032"/><circle cx="22.5" cy="27" r="3.5" fill="#151a1c"/><circle cx="16" cy="15.5" r="14.4" fill="url(#sh)"/></g><circle cx="16" cy="15.5" r="14.2" fill="none" stroke="#2b3032" stroke-width="1" opacity="0.7"/></svg>
<div class="t" style="left:699px;top:26px;color:#b0b0b0;font-size:13px;font-weight:normal;line-height:16px;letter-spacing:0.55px">Airing (Material)</div>
<svg style="position:absolute;left:1089px;top:27px" width="12" height="12" viewBox="0 0 12 12"><circle cx="6" cy="6" r="5.1" fill="#c4c4c4"/><path d="M4 4.6 Q4 2.6 6 2.6 Q8 2.6 8 4.3 Q8 5.3 6.8 5.9 Q6 6.3 6 7.3" fill="none" stroke="#3e3e3e" stroke-width="1.5"/><rect x="5.2" y="8.2" width="1.6" height="1.6" fill="#3e3e3e"/></svg>
<svg style="position:absolute;left:1105px;top:27px" width="12" height="12" viewBox="0 0 12 12"><g fill="#c4c4c4"><rect x="1" y="2.8" width="10.5" height="1.4"/><rect x="7.3" y="0.9" width="1.7" height="4.6"/><rect x="1" y="8.1" width="1.6" height="1.4"/><rect x="3.9" y="6.3" width="1.7" height="4.6"/><rect x="5.6" y="8.1" width="5.9" height="1.4"/></g></svg>
<svg style="position:absolute;left:1125.8px;top:28px" width="3" height="11" viewBox="0 0 3 11"><rect x="0" y="0" width="2.4" height="2.2" fill="#c4c4c4"/><rect x="0" y="4" width="2.4" height="2.2" fill="#c4c4c4"/><rect x="0" y="8" width="2.4" height="2.2" fill="#c4c4c4"/></svg>
<div class="t" style="left:696px;top:50px;color:#c4c4c4;font-size:12.5px;font-weight:normal;line-height:16px;">Shader</div>
<div style="left:748px;top:49px;width:335px;height:17px;background:#565656;border-radius:3px;border-bottom:1px solid #2c2c2c"></div>
<div class="t" style="left:751px;top:49px;color:#d8d8d8;font-size:12.5px;font-weight:normal;line-height:16px;">Mobile/Diffuse</div>
<svg style="position:absolute;left:1069px;top:54px" width="9" height="6" viewBox="0 0 9 6"><path d="M0.5 0.5 L8.5 0.5 L4.5 5.5 Z" fill="#c4c4c4"/></svg>
<div style="left:1088px;top:49px;width:42px;height:17px;background:#565656;border-radius:3px;border-bottom:1px solid #2c2c2c"></div>
<div class="t" style="left:1094.5px;top:49px;color:#d8d8d8;font-size:12.5px;font-weight:normal;line-height:16px;">Edit...</div>
<div style="left:653px;top:74px;width:481px;height:1px;background:#232323;"></div>
<div style="left:653px;top:75px;width:481px;height:849px;background:#383838;"></div>
<div class="t" style="left:672px;top:84px;color:#c4c4c4;font-size:12.5px;font-weight:normal;line-height:16px;">Base (RGB)</div>
<div style="left:1067px;top:82px;width:64px;height:64px;background:#1c1c1c;"></div>
<div style="left:1070px;top:85px;width:58px;height:58px;overflow:hidden"><div style="left:0px;top:0px;width:58px;height:58px;background:#9a8c73"></div><div style="left:1px;top:1px;width:28px;height:19px;background:#a3bbbb"></div><div style="left:2px;top:2px;width:26px;height:17px;background:#9fb6b6"></div><div style="left:10.5px;top:5.5px;width:4.5px;height:3.5px;background:#6e8382"></div><div style="left:19.5px;top:5.5px;width:4.5px;height:3.5px;background:#6e8382"></div><div style="left:1px;top:21px;width:28px;height:19px;background:#94abab"></div><div style="left:15px;top:23px;width:11.5px;height:15.5px;background:#b3c6c5"></div><div style="left:1px;top:40px;width:46px;height:9px;background:#8fa5a4"></div><div style="left:10px;top:41px;width:11px;height:7px;background:#9db2b1"></div><div style="left:48px;top:40px;width:8px;height:8px;background:#d6d4da"></div><div style="left:1px;top:49.5px;width:30px;height:1.3px;background:#c0c8c8"></div><div style="left:1px;top:50.8px;width:30px;height:2.2px;background:#6f8686"></div><div style="left:1px;top:53px;width:30px;height:5px;background:#a89690"></div><div style="left:30.5px;top:4px;width:6.5px;height:6px;background:#b8a8a8"></div><div style="left:30.5px;top:9.6px;width:11px;height:4px;background:#6b5e58"></div><div style="left:38.5px;top:1.5px;width:9px;height:11.5px;background:#8e8e95"></div><div style="left:48.5px;top:4px;width:8.5px;height:9.7px;background:#a9a8b0"></div><div style="left:31px;top:14.4px;width:14px;height:10.5px;background:#a2a3ae"></div><div style="left:35px;top:18px;width:6px;height:3px;background:#7b7d88"></div><div style="left:46px;top:14.8px;width:10.6px;height:7.4px;background:#c8c6cc"></div><div style="left:47.5px;top:16.5px;width:7.5px;height:4.2px;background:#5a5a60"></div><div style="left:31px;top:24.4px;width:23px;height:14.6px;background:#8f909a"></div><div style="left:34px;top:27px;width:8px;height:7.4px;background:#55565c"></div><div style="left:42.5px;top:25px;width:11px;height:13.5px;background:#989aa4"></div><div style="left:4.3px;top:22.5px;width:7.6px;height:7.6px;border-radius:50%;background:#546a6a"></div><div style="left:4.3px;top:31.6px;width:7.6px;height:7.6px;border-radius:50%;background:#546a6a"></div></div>
<div style="left:1094px;top:133px;width:37px;height:13px;background:#2e2e2e;border-radius:2px 0 0 0"></div>
<div class="t" style="left:1097px;top:132px;color:#c0c0c0;font-size:11px;font-weight:normal;line-height:14px;">Select</div>
<div class="t" style="left:687px;top:112px;color:#c4c4c4;font-size:12.5px;font-weight:normal;line-height:16px;">Tiling</div>
<div class="t" style="left:687px;top:132px;color:#c4c4c4;font-size:12.5px;font-weight:normal;line-height:16px;">Offset</div>
<div class="t" style="left:752px;top:112px;color:#c4c4c4;font-size:12.5px;font-weight:normal;line-height:16px;">X</div>
<div style="left:766px;top:110px;width:140px;height:18px;background:#2a2a2a;border-radius:3px;border-top:1px solid #1c1c1c"></div>
<div class="t" style="left:769px;top:112px;color:#d2d2d2;font-size:12.5px;font-weight:normal;line-height:16px;">1</div>
<div class="t" style="left:911px;top:112px;color:#c4c4c4;font-size:12.5px;font-weight:normal;line-height:16px;">Y</div>
<div style="left:925px;top:110px;width:140px;height:18px;background:#2a2a2a;border-radius:3px;border-top:1px solid #1c1c1c"></div>
<div class="t" style="left:928px;top:112px;color:#d2d2d2;font-size:12.5px;font-weight:normal;line-height:16px;">1</div>
<div class="t" style="left:752px;top:132px;color:#c4c4c4;font-size:12.5px;font-weight:normal;line-height:16px;">X</div>
<div style="left:766px;top:130px;width:140px;height:18px;background:#2a2a2a;border-radius:3px;border-top:1px solid #1c1c1c"></div>
<div class="t" style="left:769px;top:132px;color:#d2d2d2;font-size:12.5px;font-weight:normal;line-height:16px;">0</div>
<div class="t" style="left:911px;top:132px;color:#c4c4c4;font-size:12.5px;font-weight:normal;line-height:16px;">Y</div>
<div style="left:925px;top:130px;width:140px;height:18px;background:#2a2a2a;border-radius:3px;border-top:1px solid #1c1c1c"></div>
<div class="t" style="left:928px;top:132px;color:#d2d2d2;font-size:12.5px;font-weight:normal;line-height:16px;">0</div>
<div class="t" style="left:672px;top:170px;color:#c4c4c4;font-size:12.5px;font-weight:normal;line-height:16px;">Render Queue</div>
<div style="left:967px;top:169px;width:97px;height:17px;background:#565656;border-radius:3px;border-bottom:1px solid #2c2c2c"></div>
<div class="t" style="left:970px;top:169px;color:#d8d8d8;font-size:12.5px;font-weight:normal;line-height:16px;">From Shader</div>
<svg style="position:absolute;left:1050px;top:174px" width="9" height="6" viewBox="0 0 9 6"><path d="M0.5 0.5 L8.5 0.5 L4.5 5.5 Z" fill="#c4c4c4"/></svg>
<div style="left:1067px;top:168px;width:64px;height:18px;background:#2a2a2a;border-radius:3px;border-top:1px solid #1c1c1c"></div>
<div class="t" style="left:1070px;top:170px;color:#d2d2d2;font-size:12.5px;font-weight:normal;line-height:16px;letter-spacing:0.4px">2000</div>
<div class="t" style="left:672px;top:192px;color:#c4c4c4;font-size:12.5px;font-weight:normal;line-height:16px;">Enable GPU Instancing</div>
<div style="left:1066px;top:193px;width:14px;height:14px;background:#2a2a2a;border-radius:2px;border:1px solid #242424"></div>
<div class="t" style="left:672px;top:214px;color:#c4c4c4;font-size:12.5px;font-weight:normal;line-height:16px;">Double Sided Global Illumination</div>
<div style="left:1066px;top:215px;width:14px;height:14px;background:#2a2a2a;border-radius:2px;border:1px solid #242424"></div>
<div style="left:653px;top:924px;width:481px;height:1px;background:#232323;"></div>
<div style="left:653px;top:925px;width:481px;height:20px;background:#3c3c3c;"></div>
<div style="left:653px;top:945px;width:481px;height:1px;background:#232323;"></div>
<div class="t" style="left:660px;top:927.5px;color:#cccccc;font-size:12.5px;font-weight:bold;line-height:16px;">Airing</div>
<div style="left:700px;top:934px;width:416px;height:1px;background:#6a6a6a;"></div>
<div style="left:700px;top:937px;width:416px;height:1px;background:#6a6a6a;"></div>
<div style="left:1118px;top:925px;width:1px;height:20px;background:#2a2a2a;"></div>
<svg style="position:absolute;left:1126px;top:930px" width="3" height="11" viewBox="0 0 3 11"><rect x="0" y="0" width="2.4" height="2.2" fill="#d0d0d0"/><rect x="0" y="4" width="2.4" height="2.2" fill="#d0d0d0"/><rect x="0" y="8" width="2.4" height="2.2" fill="#d0d0d0"/></svg>
</body></html>
